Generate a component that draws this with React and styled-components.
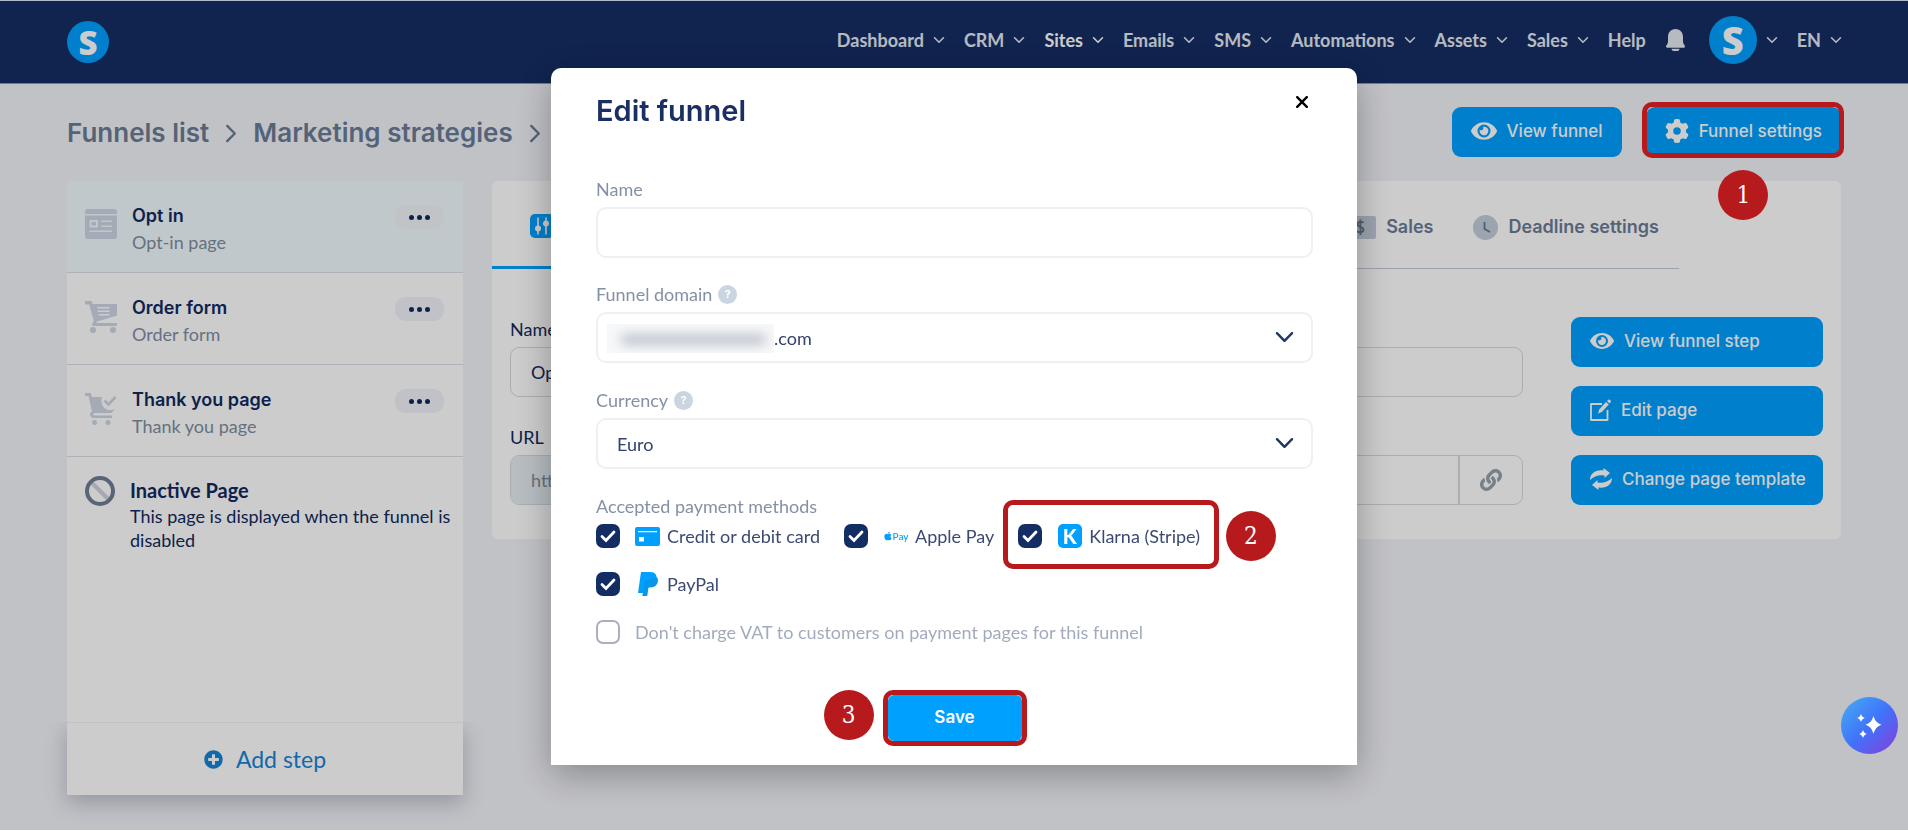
import React, { useState } from "react"
import styled, { createGlobalStyle, css } from "styled-components"
import { FaApple, FaEye, FaLink, FaPlusCircle } from "react-icons/fa"
import { FaGear } from "react-icons/fa6"

const colors = {
  navy: "#142d63",
  ink: "#122a5e",
  blue: "#00a0ff",
  page: "#f2f3f8",
  slate: "#6b7c96",
  muted: "#808e9f",
  line: "#d9dfe6",
  icon: "#cdd6e4",
  red: "#b71a1c",
}

const heading = `"Inter", "Liberation Sans", sans-serif`
const body = `"Lato", "Liberation Sans", sans-serif`

const GlobalStyle = createGlobalStyle`
  * {
    box-sizing: border-box;
  }
  body {
    margin: 0;
    background: #fff;
    color: ${colors.ink};
    font: 400 18px/24px ${body};
  }
  button, input, select {
    font: inherit;
    color: inherit;
    margin: 0;
  }
  button {
    border: 0;
    padding: 0;
    background: none;
    cursor: pointer;
  }
  a {
    color: inherit;
    text-decoration: none;
  }
  svg {
    display: block;
    flex: none;
  }
`

/* ---------- callouts ---------- */

const Marked = styled.div`
  position: relative;
  display: flex;
`

const Frame = styled.span(
  ({ $inset }) => css`
    position: absolute;
    inset: ${$inset};
    border: 5px solid ${colors.red};
    border-radius: 10px;
    pointer-events: none;
    z-index: 3;
  `
)

const Badge = styled.span(
  ({ $top, $left }) => css`
    position: absolute;
    top: ${$top};
    left: ${$left};
    z-index: 3;
    display: grid;
    place-items: center;
    width: 50px;
    height: 50px;
    border-radius: 50%;
    background: ${colors.red};
    color: #fff;
    font: 400 24px/24px "DejaVu Serif Condensed", "Liberation Serif", serif;
  `
)

/* ---------- header ---------- */

const Page = styled.div`
  display: flex;
  flex-direction: column;
  min-height: calc(100vh - 1px);
  background: ${colors.page};
`

const Header = styled.header`
  display: flex;
  align-items: center;
  justify-content: space-between;
  height: 84px;
  padding: 0 67px;
  background: ${colors.navy};
  border-top: 1px solid #dcecff;
  border-bottom: 1px solid #8b9cc0;
`

const Logo = styled.a(
  ({ $size }) => css`
    display: grid;
    place-items: center;
    width: ${$size}px;
    height: ${$size}px;
    border-radius: 50%;
    background: ${colors.blue};
    color: #fff;
    font: 800 ${$size > 45 ? 38 : 33}px/1 "Open Sans", sans-serif;
  `
)

const Nav = styled.nav`
  display: flex;
  align-items: center;
  gap: 20px;
  margin-bottom: 5px;
`

const NavItem = styled.button(
  ({ $active }) => css`
    display: flex;
    align-items: center;
    gap: 10px;
    font-weight: 700;
    color: ${$active ? "#fff" : "#e4e9f2"};
  `
)

const Bell = styled.button`
  margin-right: 4px;
  color: #e4e9f2;
`

/* ---------- title bar ---------- */

const TitleBar = styled.div`
  display: flex;
  align-items: center;
  justify-content: space-between;
  padding: 23px 67px 24px;
`

const Crumbs = styled.nav`
  display: flex;
  align-items: center;
  gap: 17px;
  padding-top: 2px;
  color: ${colors.slate};
  font: 600 26px/32px ${heading};
`

const Actions = styled.div`
  display: flex;
  gap: 24px;
`

const Button = styled.button`
  display: flex;
  align-items: center;
  gap: 10px;
  height: 50px;
  padding: 0 19px 2px;
  border-radius: 9px;
  background: ${colors.blue};
  color: #fff;
  font: 500 17px/24px ${heading};
  white-space: nowrap;
`

/* ---------- main area ---------- */

const Main = styled.main`
  flex: 1;
  display: grid;
  grid-template-columns: 396px 1fr;
  gap: 29px;
  padding: 0 67px 35px;
`

const Steps = styled.aside`
  display: flex;
  flex-direction: column;
  background: #fff;
`

const Step = styled.div(
  ({ $active }) => css`
    display: flex;
    align-items: flex-start;
    gap: 15px;
    height: 92px;
    padding: 0 19px 0 18px;
    border-bottom: 1px solid ${colors.line};
    background: ${$active ? "#f0fafe" : "#fff"};
  `
)

const StepIcon = styled.div`
  margin-top: 28px;
  color: ${colors.icon};
`

const StepText = styled.div`
  flex: 1;
  padding-top: 21px;
  line-height: 27px;
  color: ${colors.muted};
`

const StepTitle = styled.div`
  color: ${colors.ink};
  font: 600 18px/27px ${heading};
`

const More = styled.button(
  ({ $active }) => css`
    display: flex;
    align-items: center;
    justify-content: center;
    gap: 3px;
    width: 49px;
    height: 24px;
    margin-top: 24px;
    border-radius: 11px;
    background: ${$active ? "#f1f5f8" : "#f1f3f9"};
  `
)

const Dot = styled.i`
  width: 5px;
  height: 5px;
  border-radius: 50%;
  background: ${colors.ink};
`

const Inactive = styled.div`
  display: flex;
  gap: 15px;
  padding: 19px 8px 0 18px;
`

const InactiveTitle = styled.div`
  font-weight: 700;
  font-size: 20px;
  line-height: 28px;
`

const AddStep = styled.button`
  display: flex;
  align-items: center;
  justify-content: center;
  gap: 13px;
  height: 73px;
  margin-top: auto;
  background: #fff;
  border-top: 1px solid #f3f3f5;
  box-shadow: 0 8px 20px rgba(20, 30, 60, 0.25);
  clip-path: inset(0 -30px -30px -30px);
  color: #1684d6;
  font-size: 23px;
`

const Card = styled.section`
  align-self: start;
  border-radius: 6px;
  background: #fff;
`

const Tabs = styled.div`
  display: flex;
  height: 88px;
  margin-right: 162px;
  border-bottom: 1px solid #c5ccd8;
`

const Tab = styled.button(
  ({ $active }) => css`
    display: flex;
    align-items: center;
    gap: 10px;
    padding: 5px 20px 0;
    color: ${colors.slate};
    font: 600 18px/24px ${heading};
    ${$active &&
    css`
      width: 220px;
      margin: 0 auto -1px 0;
      padding-left: 38px;
      border-bottom: 3px solid ${colors.blue};
    `}
  `
)

const CardBody = styled.div`
  display: grid;
  grid-template-columns: 1fr 252px;
  gap: 48px;
  padding: 48px 18px 34px;
`

const StepForm = styled.form`
  display: flex;
  flex-direction: column;
  gap: 28px;
`

const SideButtons = styled.div`
  display: flex;
  flex-direction: column;
  gap: 19px;
`

const StepField = styled.div`
  display: flex;
  flex-direction: column;
  gap: 6px;
`

const InputGroup = styled.div`
  display: flex;
  height: 50px;
  overflow: hidden;
  border: 1px solid #d6dade;
  border-radius: 9px;
`

const Prefix = styled.span`
  display: flex;
  align-items: center;
  padding: 0 20px;
  border-right: 1px solid #d6dade;
  background: #e5edf1;
  color: ${colors.muted};
`

const BareInput = styled.input`
  flex: 1;
  padding: 0 20px;
  border: 0;
  background: transparent;
  outline: none;
`

const LinkCell = styled.button`
  display: grid;
  place-items: center;
  width: 64px;
  border-left: 2px solid #d6dade;
  color: #93a1ac;
`

/* ---------- dialog ---------- */

const Backdrop = styled.div`
  position: fixed;
  inset: 0 0 1px;
  z-index: 2;
  display: flex;
  align-items: flex-start;
  justify-content: center;
  padding-top: 68px;
  background: rgba(0, 0, 0, 0.2);
`

const Dialog = styled.form`
  width: 806px;
  max-width: 100%;
  padding: 23px 44px 24px 45px;
  border-radius: 10px 10px 0 0;
  background: #fff;
  box-shadow: 0 10px 36px rgba(0, 0, 0, 0.3);
`

const DialogHead = styled.div`
  display: flex;
  align-items: flex-start;
  justify-content: space-between;
  margin-bottom: 46px;
`

const DialogTitle = styled.h2`
  margin: 0;
  color: #1c2f63;
  font: 600 29px/40px ${heading};
`

const Close = styled.button`
  display: grid;
  place-items: center;
  width: 22px;
  height: 22px;
  color: #000;
`

const Field = styled.div`
  display: flex;
  flex-direction: column;
  gap: 6px;
  margin-bottom: ${({ $last }) => ($last ? 25 : 24)}px;
`

const LabelRow = styled.div`
  display: flex;
  gap: 6px;
  color: #8490a5;
`

const Help = styled.button`
  width: 19px;
  height: 19px;
  margin-top: 3px;
  border-radius: 50%;
  background: #cbd5e2;
  color: #fff;
  font: 700 11px/19px ${heading};
`

const box = css`
  width: 100%;
  height: 51px;
  padding: 0 19px;
  border: 2px solid #f0f0f1;
  border-radius: 10px;
  background: #fff;
  color: #33426f;
  outline: none;
`

const TextInput = styled.input`
  ${box}
`

const SelectWrap = styled.div`
  position: relative;
  display: flex;

  svg {
    position: absolute;
    right: 20px;
    top: 20px;
    color: #1f3566;
    pointer-events: none;
  }
`

const Select = styled.select(
  ({ $masked }) => css`
    ${box}
    appearance: none;
    ${$masked && "padding-left: 176px;"}
  `
)

const Mask = styled.span`
  position: absolute;
  top: 12px;
  left: 11px;
  width: 167px;
  height: 29px;
  overflow: hidden;
  background: #f7f8f9;
  pointer-events: none;

  &::after {
    content: "";
    position: absolute;
    inset: 11px 8px 9px 14px;
    border-radius: 4px;
    background: #b3b9c4;
    filter: blur(6px);
  }
`

const Methods = styled.fieldset`
  display: flex;
  flex-wrap: wrap;
  gap: 24px;
  margin: 0 0 24px;
  padding: 0;
  border: 0;
`

const MethodsTitle = styled.legend`
  margin-bottom: 6px;
  padding: 0;
  color: #8490a5;
`

const Option = styled.label(
  ({ $quiet }) => css`
    display: flex;
    align-items: center;
    gap: 15px;
    height: 24px;
    color: ${$quiet ? "#a2abbd" : "#3c4a72"};
  `
)

const OptionText = styled.span`
  display: flex;
  align-items: center;
  gap: 7px;
`

const OptionIcon = styled.span`
  display: flex;
  align-items: center;
  justify-content: center;
  width: 25px;
  color: ${colors.blue};
`

const Tick = styled.span`
  display: grid;
  place-items: center;
  width: 24px;
  height: 24px;

  input,
  svg {
    grid-area: 1 / 1;
  }

  svg {
    z-index: 1;
    pointer-events: none;
  }
`

const CheckInput = styled.input`
  appearance: none;
  width: 24px;
  height: 24px;
  border: 2px solid #a9afbd;
  border-radius: 7px;
  background: #fff;

  &:checked {
    border-color: ${colors.navy};
    background: ${colors.navy};
  }
`

const KMark = styled.span`
  display: grid;
  place-items: center;
  width: 24px;
  height: 24px;
  border-radius: 5px;
  background: ${colors.blue};
  color: #fff;
  font: 900 20px/24px ${body};
`

const PayMark = styled.span`
  display: flex;
  align-items: center;
  font: 500 10px/12px ${body};
`

const SaveRow = styled.div`
  display: flex;
  justify-content: center;
  margin-top: 51px;
`

const Save = styled.button`
  width: 134px;
  height: 46px;
  padding-bottom: 2px;
  border-radius: 6px;
  background: ${colors.blue};
  color: #fff;
  font: 600 17px/24px ${heading};
`

const Assistant = styled.button`
  position: fixed;
  right: 10px;
  bottom: 77px;
  z-index: 3;
  display: grid;
  place-items: center;
  width: 57px;
  height: 57px;
  border-radius: 50%;
  background: linear-gradient(135deg, #45a3f3 10%, #4073fb 50%, #7d45dc 92%);
  color: #fff;
`

/* ---------- icons ---------- */

const Chevron = ({ width = 10, height = 6, stroke = 1.6, right }) => (
  <svg
    width={right ? height : width}
    height={right ? width : height}
    viewBox={right ? "0 0 10 18" : "0 0 18 10"}
    fill="none"
    stroke="currentColor"
    strokeWidth={(stroke * 18) / width}
    strokeLinecap="round"
    strokeLinejoin="round"
    overflow="visible"
  >
    <path d={right ? "M1 1l8 8-8 8" : "M1 1l8 8 8-8"} />
  </svg>
)

const BellIcon = () => (
  <svg width="19" height="22" viewBox="0 0 19 22" fill="currentColor">
    <path d="M9.500 0C4.500 0 2 3.800 2 8v5c0 2-2 3-2 4.600 0 .8.500 1.200 1.300 1.200h16.400c.8 0 1.300-.4 1.300-1.200C19 16 17 15 17 13V8c0-4.200-2.500-8-7.500-8z" />
    <path d="M5.500 19.800h8c0 1.400-1 2.200-2.400 2.200H7.900c-1.400 0-2.400-.8-2.400-2.200z" />
  </svg>
)

const OptInIcon = () => (
  <svg width="32" height="30" viewBox="0 0 32 30" fill="currentColor">
    <path d="M3 0h26a3 3 0 0 1 3 3v2H0V3a3 3 0 0 1 3-3z" />
    <path
      fillRule="evenodd"
      d="M0 6.500h32V27a3 3 0 0 1-3 3H3a3 3 0 0 1-3-3zM4.500 11v7.500H13V11zm2 2H11v3.500H6.500zM16 11.500v1.500h11v-1.500zm0 5v1.500h11v-1.500zM4.500 21.500V23H27v-1.500z"
    />
  </svg>
)

const CartIcon = () => (
  <svg width="32" height="32" viewBox="0 0 32 32" fill="currentColor">
    <path
      fillRule="evenodd"
      d="M0 0h6.500l1.200 3H32v11.500L12 20.500l-.8 1.500H32v3H8.500C7 25 6.800 23.500 7.500 22.400L8.800 20 4.200 3.500H0zM12.500 6v1.500h12V6zm0 3.500V11h12V9.500zm1 3.500v1.500h11V13z"
    />
    <circle cx="8" cy="29" r="3" />
    <circle cx="28" cy="29" r="3" />
  </svg>
)

const CartCheckIcon = () => (
  <svg width="32" height="32" viewBox="0 0 32 32" fill="currentColor">
    <path d="M0 0h5.500L7 4h10c-2 6 1 13 8 13 2 0 3.500-.5 5-1.500L26.500 20H10c-2 0-2.500 2.500 0 2.500h17V25H9.500c-5 0-6-5-2.500-6.500L3.500 3H0z" />
    <path d="M19.500 7.500l4 4L30.500 4" fill="none" stroke="currentColor" strokeWidth="2.600" />
    <circle cx="9.500" cy="29.500" r="2.500" />
    <circle cx="23" cy="29.500" r="2.500" />
  </svg>
)

const BlockedIcon = () => (
  <svg width="30" height="30" viewBox="0 0 30 30" fill="none">
    <path d="M6.500 6.500l17 17" stroke="#cdd4df" strokeWidth="4" />
    <circle cx="15" cy="15" r="13" stroke="#707e97" strokeWidth="4" />
  </svg>
)

const SlidersIcon = () => (
  <svg width="24" height="24" viewBox="0 0 24 24">
    <rect width="24" height="24" rx="5" fill={colors.blue} />
    <path d="M8 3.500v17M16 3.500v17" stroke="#fff" strokeWidth="1.600" />
    <circle cx="8" cy="14.500" r="3" fill="#fff" />
    <circle cx="16" cy="9.500" r="3" fill="#fff" />
  </svg>
)

const MoneyIcon = () => (
  <svg width="25" height="23" viewBox="0 0 25 23">
    <rect width="25" height="23" rx="2" fill="#c3cddb" />
    <path
      d="M12.500 6.800C11.500 5.500 6.500 5.300 6.500 8.300c0 3 6 2 6 5.400 0 3.200-5.300 3-6.500 1.300M9.400 3.500v15.500"
      fill="none"
      stroke="#66758f"
      strokeWidth="1.800"
    />
  </svg>
)

const ClockIcon = () => (
  <svg width="25" height="25" viewBox="0 0 25 25">
    <circle cx="12.500" cy="12.500" r="12.500" fill="#c3cddb" />
    <path d="M11.500 7v7l5.500 3" fill="none" stroke="#66758f" strokeWidth="1.800" />
  </svg>
)

const EditIcon = () => (
  <svg width="21" height="22" viewBox="0 0 21 22" fill="none" stroke="currentColor">
    <path d="M12 5H1v16h16.500V11" strokeWidth="1.800" strokeLinejoin="round" />
    <path d="M8 14.500l1.200-4L16 3l2.800 2.600-7 7.500z" fill="currentColor" stroke="none" />
    <path d="M17 2l1.300-1.300c1-.9 3.400 1 2.400 2.400l-1.200 1.500z" fill="currentColor" stroke="none" />
  </svg>
)

const SwapIcon = () => (
  <svg width="22" height="22" viewBox="0 0 22 22" fill="currentColor">
    <path d="M0 12C0 5.500 5.500 1.500 13.500 2.500V0L20 5l-5.500 5V7.500C9 6.500 4 8 0 12z" />
    <path d="M22 10c0 6.500-5.500 10.500-13.500 9.500V22L2 17l5.500-5v2.500C13 15.500 18 14 22 10z" />
  </svg>
)

const CloseIcon = () => (
  <svg width="12" height="12" viewBox="0 0 12 12" stroke="currentColor" strokeWidth="2.400" strokeLinecap="round">
    <path d="M1.200 1.200l9.600 9.600M10.800 1.200l-9.600 9.600" />
  </svg>
)

const TickIcon = () => (
  <svg width="16" height="13" viewBox="0 0 16 13" fill="none" stroke="#fff" strokeWidth="2.800" strokeLinecap="round">
    <path d="M2 6.500l4 4L14 2" />
  </svg>
)

const CardIcon = () => (
  <svg width="25" height="19" viewBox="0 0 25 19" fill="currentColor">
    <path
      fillRule="evenodd"
      d="M2 0h21a2 2 0 0 1 2 2v15a2 2 0 0 1-2 2H2a2 2 0 0 1-2-2V2a2 2 0 0 1 2-2zM3 4v1.200h19V4zm1 6v4.400h5V10z"
    />
  </svg>
)

const PaypalIcon = () => (
  <svg width="20" height="24" viewBox="0 0 20 24">
    <path d="M3 0h9.500c4.500 0 6.800 3 5.800 7-1 4.500-4 6.500-8 6.500H7.500L6 21H0z" fill="#00a0ff" />
    <path d="M18.500 5c2 1.800 1.700 4.500.6 6.800-1.300 2.700-3.700 3.700-6.600 3.700h-2L9.200 24H4.300L7 9z" fill="#0796ea" />
  </svg>
)

const SparkleIcon = () => (
  <svg width="25" height="24" viewBox="0 0 25 24" fill="currentColor">
    <path d="M16.500 2c1.800 5.200 3 6.500 8 8.800-5 2.200-6.200 3.700-8 9-1.800-5.300-3-6.800-8-9 5-2.300 6.200-3.600 8-8.800z" />
    <path d="M4 0c.9 2.300 1.500 3 3.700 4C5.500 5 4.900 5.700 4 8 3.100 5.700 2.500 5 .3 4 2.500 3 3.100 2.300 4 0z" />
    <path d="M6 16c.9 2.300 1.500 3 3.700 4-2.200 1-2.800 1.700-3.700 4-.9-2.300-1.500-3-3.700-4 2.200-1 2.800-1.700 3.700-4z" />
  </svg>
)

/* ---------- data ---------- */

const menus = ["Dashboard", "CRM", "Sites", "Emails", "SMS", "Automations", "Assets", "Sales"]

const steps = [
  { title: "Opt in", kind: "Opt-in page", Icon: OptInIcon },
  { title: "Order form", kind: "Order form", Icon: CartIcon },
  { title: "Thank you page", kind: "Thank you page", Icon: CartCheckIcon },
]

const methods = [
  { id: "card", label: "Credit or debit card", icon: <CardIcon /> },
  { id: "apple", label: "Apple Pay", icon: <PayMark><FaApple size={10} />Pay</PayMark> },
  { id: "klarna", label: "Klarna (Stripe)", icon: <KMark>K</KMark>, badge: 2 },
  { id: "paypal", label: "PayPal", icon: <PaypalIcon /> },
]

const Checkbox = ({ checked, onChange, icon, label, quiet }) => (
  <Option $quiet={quiet}>
    <Tick>
      <CheckInput type="checkbox" checked={checked} onChange={onChange} />
      {checked && <TickIcon />}
    </Tick>
    <OptionText>
      {icon && <OptionIcon>{icon}</OptionIcon>}
      {label}
    </OptionText>
  </Option>
)

const EditFunnel = () => {
  const [enabled, setEnabled] = useState({ card: true, apple: true, klarna: true, paypal: true, vat: false })
  const toggle = (id) => setEnabled({ ...enabled, [id]: !enabled[id] })

  return (
    <Backdrop>
      <Dialog role="dialog" aria-labelledby="edit-funnel" onSubmit={(e) => e.preventDefault()}>
        <DialogHead>
          <DialogTitle id="edit-funnel">Edit funnel</DialogTitle>
          <Close type="button" aria-label="Close">
            <CloseIcon />
          </Close>
        </DialogHead>
        <Field>
          <LabelRow>
            <label htmlFor="funnel-name">Name</label>
          </LabelRow>
          <TextInput id="funnel-name" />
        </Field>
        <Field $last>
          <LabelRow>
            <label htmlFor="funnel-domain">Funnel domain</label>
            <Help type="button">?</Help>
          </LabelRow>
          <SelectWrap>
            <Select id="funnel-domain" $masked>
              <option>.com</option>
            </Select>
            <Mask />
            <Chevron width={17} height={10} stroke={2.4} />
          </SelectWrap>
        </Field>
        <Field $last>
          <LabelRow>
            <label htmlFor="funnel-currency">Currency</label>
            <Help type="button">?</Help>
          </LabelRow>
          <SelectWrap>
            <Select id="funnel-currency">
              <option>Euro</option>
            </Select>
            <Chevron width={17} height={10} stroke={2.4} />
          </SelectWrap>
        </Field>
        <Methods>
          <MethodsTitle>Accepted payment methods</MethodsTitle>
          {methods.map(({ id, label, icon, badge }) => (
            <Marked key={id}>
              <Checkbox checked={enabled[id]} onChange={() => toggle(id)} icon={icon} label={label} />
              {badge && (
                <>
                  <Frame $inset="-24px -19px -21px -15px" />
                  <Badge $top="-13px" $left="calc(100% + 26px)">{badge}</Badge>
                </>
              )}
            </Marked>
          ))}
        </Methods>
        <Checkbox
          quiet
          checked={enabled.vat}
          onChange={() => toggle("vat")}
          label="Don't charge VAT to customers on payment pages for this funnel"
        />
        <SaveRow>
          <Marked>
            <Save type="submit">Save</Save>
            <Frame $inset="-5px" />
            <Badge $top="-5px" $left="-64px">3</Badge>
          </Marked>
        </SaveRow>
      </Dialog>
    </Backdrop>
  )
}

export default function App() {
  return (
    <Page>
      <GlobalStyle />
      <Header>
        <Logo href="#" $size={42}>S</Logo>
        <Nav>
          {menus.map((name) => (
            <NavItem key={name} $active={name === "Sites"}>
              {name}
              <Chevron />
            </NavItem>
          ))}
          <NavItem>Help</NavItem>
          <Bell aria-label="Notifications">
            <BellIcon />
          </Bell>
          <NavItem>
            <Logo as="span" $size={48}>S</Logo>
            <Chevron />
          </NavItem>
          <NavItem>
            EN
            <Chevron />
          </NavItem>
        </Nav>
      </Header>

      <TitleBar>
        <Crumbs>
          <a href="#">Funnels list</a>
          <Chevron right width={17} height={10} stroke={2.4} />
          <a href="#">Marketing strategies</a>
          <Chevron right width={17} height={10} stroke={2.4} />
        </Crumbs>
        <Actions>
          <Button>
            <FaEye size={26} />
            View funnel
          </Button>
          <Marked>
            <Button>
              <FaGear size={24} />
              Funnel settings
            </Button>
            <Frame $inset="-5px -3px -1px -4px" />
            <Badge $top="63px" $left="calc(50% - 25px)">1</Badge>
          </Marked>
        </Actions>
      </TitleBar>

      <Main>
        <Steps>
          {steps.map(({ title, kind, Icon }, i) => (
            <Step key={title} $active={i === 0}>
              <StepIcon>
                <Icon />
              </StepIcon>
              <StepText>
                <StepTitle>{title}</StepTitle>
                {kind}
              </StepText>
              <More $active={i === 0} aria-label={`${title} options`}>
                <Dot />
                <Dot />
                <Dot />
              </More>
            </Step>
          ))}
          <Inactive>
            <BlockedIcon />
            <div>
              <InactiveTitle>Inactive Page</InactiveTitle>
              This page is displayed when the funnel is disabled
            </div>
          </Inactive>
          <AddStep>
            <FaPlusCircle size={19} />
            Add step
          </AddStep>
        </Steps>

        <Card>
          <Tabs>
            <Tab $active aria-label="Step configuration">
              <SlidersIcon />
            </Tab>
            <Tab>
              <MoneyIcon />
              Sales
            </Tab>
            <Tab>
              <ClockIcon />
              Deadline settings
            </Tab>
          </Tabs>
          <CardBody>
            <StepForm onSubmit={(e) => e.preventDefault()}>
              <StepField>
                <label htmlFor="step-name">Name</label>
                <InputGroup>
                  <BareInput id="step-name" defaultValue="Opt in" />
                </InputGroup>
              </StepField>
              <StepField>
                <label htmlFor="step-url">URL</label>
                <InputGroup>
                  <Prefix>https://</Prefix>
                  <BareInput id="step-url" />
                  <LinkCell type="button" aria-label="Copy link">
                    <FaLink size={22} />
                  </LinkCell>
                </InputGroup>
              </StepField>
            </StepForm>
            <SideButtons>
              <Button>
                <FaEye size={24} />
                View funnel step
              </Button>
              <Button>
                <EditIcon />
                Edit page
              </Button>
              <Button>
                <SwapIcon />
                Change page template
              </Button>
            </SideButtons>
          </CardBody>
        </Card>
      </Main>

      <EditFunnel />
      <Assistant aria-label="Assistant">
        <SparkleIcon />
      </Assistant>
    </Page>
  )
}
